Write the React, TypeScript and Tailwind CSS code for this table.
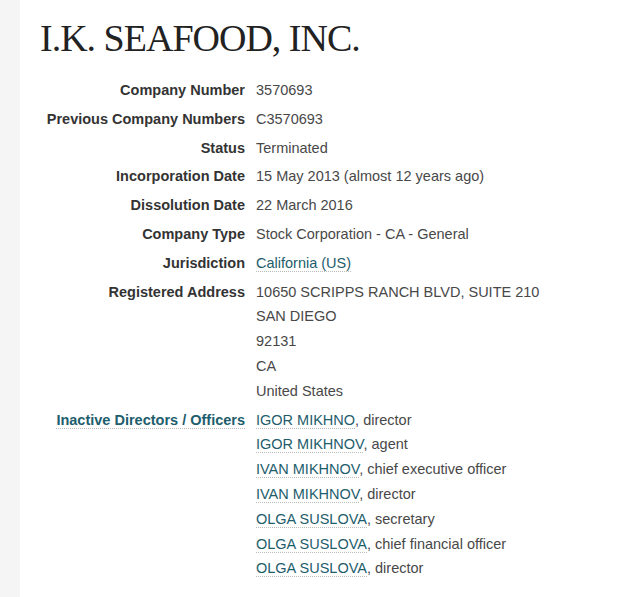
const rows: { label: string; value: React.ReactNode }[] = [
  { label: "Company Number", value: "3570693" },
  { label: "Previous Company Numbers", value: "C3570693" },
  { label: "Status", value: "Terminated" },
  { label: "Incorporation Date", value: "15 May 2013 (almost 12 years ago)" },
  { label: "Dissolution Date", value: "22 March 2016" },
  { label: "Company Type", value: "Stock Corporation - CA - General" },
];

const officers = [
  ["IGOR MIKHNO", "director"],
  ["IGOR MIKHNOV", "agent"],
  ["IVAN MIKHNOV", "chief executive officer"],
  ["IVAN MIKHNOV", "director"],
  ["OLGA SUSLOVA", "secretary"],
  ["OLGA SUSLOVA", "chief financial officer"],
  ["OLGA SUSLOVA", "director"],
];

const address = ["10650 SCRIPPS RANCH BLVD, SUITE 210", "SAN DIEGO", "92131", "CA", "United States"];

function Link({ children }: { children: React.ReactNode }) {
  return <a className="border-b border-dotted border-[#bbb] text-[#1d5d6c]">{children}</a>;
}

function Row({ label, children, accent }: { label: React.ReactNode; children: React.ReactNode; accent?: boolean }) {
  return (
    <>
      <dt className={`text-right font-bold ${accent ? "text-[#1d5d6c]" : "text-[#333]"}`}>{label}</dt>
      <dd className="text-[#484848]">{children}</dd>
    </>
  );
}

export default function App() {
  return (
    <div className="flex min-h-[597px] bg-[#f5f5f5] font-['Liberation_Sans',Arial,sans-serif]">
      <main className="ml-[20px] flex-1 bg-white pl-[20px] pt-[17px]">
        <h1 className="font-['Liberation_Serif','Times_New_Roman',serif] text-[38px] leading-[42px] tracking-[-1px] text-[#222]">
          I.K. SEAFOOD, INC.
        </h1>
        <dl className="mt-[19px] grid grid-cols-[205px_1fr] gap-x-[11px] gap-y-[4px] text-[14.5px] leading-[24.8px]">
          {rows.map((r) => (
            <Row key={r.label} label={r.label}>
              {r.value}
            </Row>
          ))}
          <Row label="Jurisdiction">
            <Link>California (US)</Link>
          </Row>
          <Row label="Registered Address">
            {address.map((l) => (
              <div key={l}>{l}</div>
            ))}
          </Row>
          <Row
            accent
            label={<span className="border-b border-dotted border-[#bbb]">Inactive Directors / Officers</span>}
          >
            {officers.map(([n, r], i) => (
              <div key={i}>
                <Link>{n}</Link>, {r}
              </div>
            ))}
          </Row>
        </dl>
      </main>
    </div>
  );
}
